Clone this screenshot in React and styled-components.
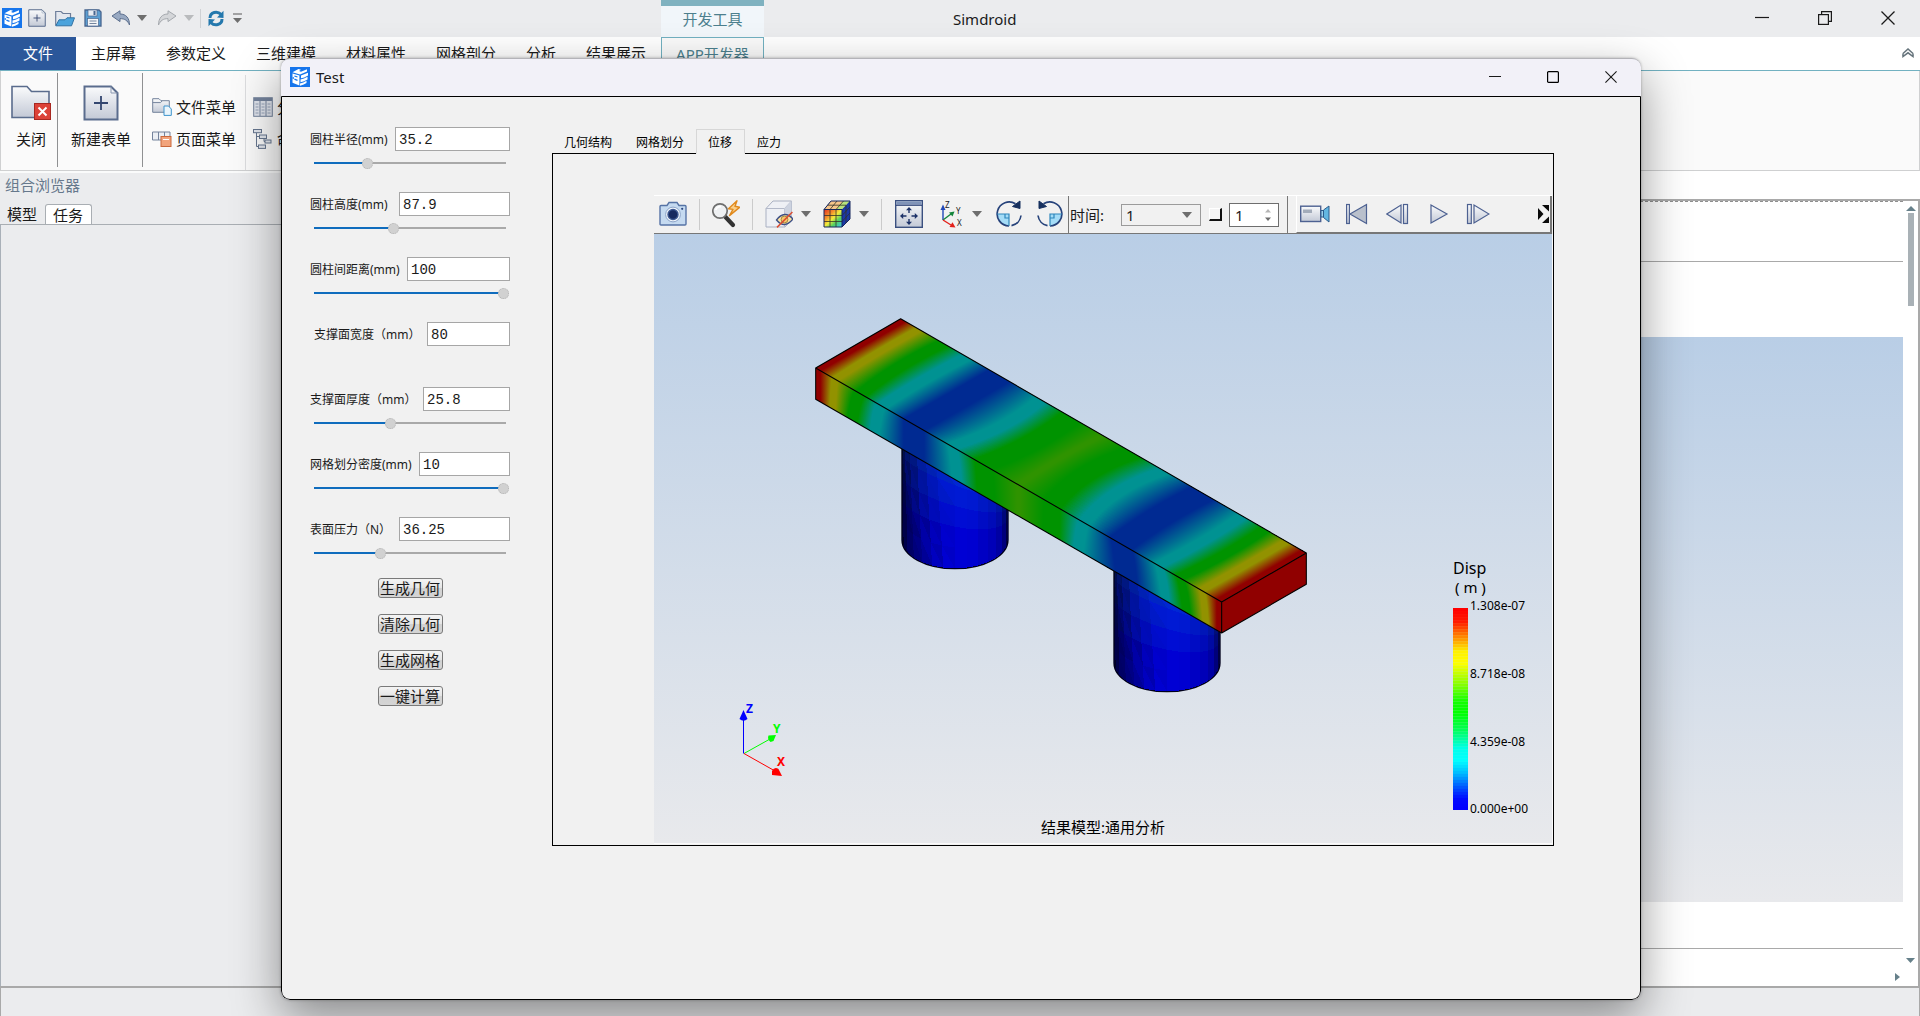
import React, { useState } from "react";
import styled, { createGlobalStyle } from "styled-components";

const GlobalStyle = createGlobalStyle`
  * { box-sizing: border-box; }
  html, body, #root { height: 100%; }
  body {
    margin: 0;
    overflow: hidden;
    background: #ebecee;
    color: #1a1a1a;
    font-family: "Noto Sans", "Noto Sans CJK SC", sans-serif;
    font-size: 15px;
    line-height: 20px;
  }
  button, input, select { font: inherit; color: inherit; }
  button { border: 0; padding: 0; background: none; }
  svg { display: block; flex: none; }
`;

/* ---------- main window ---------- */

const Desktop = styled.div`
  position: relative;
  display: flex;
  flex-direction: column;
  height: 100vh;
`;

const TitleBar = styled.header`
  display: flex;
  height: 37px;
  flex: none;
`;

const QuickAccess = styled.div`
  display: flex;
  align-items: center;
  width: 661px;
  padding: 0 0 1px 2px;
`;

const QuickButton = styled.button`
  margin-right: ${props => props.$gap || 8}px;
`;

const QuickRule = styled.span`
  width: 1px;
  height: 19px;
  margin-right: 7px;
  background: #cfd1d4;
`;

const ContextTab = styled.div`
  width: 103px;
  border-top: 6px solid #7fb2c0;
  background: #f1f6fa;
  color: #4c7f8d;
  text-align: center;
  line-height: 26px;
`;

const WindowTitle = styled.h1`
  margin: 0 auto 0 189px;
  font-size: 15px;
  font-weight: 400;
  line-height: 38px;
`;

const WindowButton = styled.button`
  display: flex;
  align-items: center;
  justify-content: center;
  width: ${props => props.$wide ? 63 : 58}px;
  padding: 0 2px 1px 0;
`;

const MenuBar = styled.nav`
  display: flex;
  flex: none;
  height: 34px;
  background: #fff;
  border-bottom: 1px solid #72b1c1;
`;

const MenuItem = styled.button`
  padding: 0 15px;
  line-height: 33px;
`;

const FileItem = styled(MenuItem)`
  width: 76px;
  background: #2b579a;
  color: #fff;
`;

const AppItem = styled(MenuItem)`
  padding: 0 14px;
  border: 1px solid #72b1c1;
  border-bottom: 0;
  background: #fafafa;
  color: #4c7f8d;
`;

const CollapseButton = styled.button`
  margin: 0 6px 2px auto;
`;

const Ribbon = styled.div`
  display: flex;
  flex: none;
  height: 100px;
  border: 1px solid #cfd0d1;
  border-top: 0;
  background: #fafafa;
`;

const RibbonGroup = styled.div`
  display: flex;
  margin: ${props => props.$light ? "4px 0 0" : "2px 0 3px"};
  padding: 0 ${props => props.$right}px 0 ${props => props.$left}px;
  border-right: 1px solid ${props => props.$light ? "#dcdddf" : "#8f9092"};
`;

const BigButton = styled.button`
  display: flex;
  flex-direction: column;
  align-items: center;
  gap: 8px;
  padding-top: 12px;
`;

const StackedButtons = styled.div`
  display: flex;
  flex-direction: column;
  gap: 12px;
  padding-top: ${props => props.$top}px;
`;

const SmallButton = styled.button`
  display: flex;
  align-items: center;
  gap: 4px;
  height: 20px;
  white-space: nowrap;
`;

const WorkArea = styled.main`
  display: flex;
  flex: 1;
  min-height: 0;
`;

const Browser = styled.aside`
  display: flex;
  flex-direction: column;
  width: 400px;
  border-top: 2px solid #fafbfb;
`;

const BrowserTitle = styled.h2`
  margin: 0;
  padding: 2px 5px 9px;
  color: #66788c;
  font-size: 15px;
  font-weight: 400;
`;

const BrowserTabs = styled.div`
  display: flex;
  border-bottom: 1px solid #a9aeb3;
`;

const BrowserTab = styled.button`
  height: 20px;
  padding: 0 8px 0 7px;
  ${props => props.$active && `
    border: 1px solid #a9aeb3;
    border-bottom: 0;
    border-radius: 3px 3px 0 0;
    background: #fff;
  `}
`;

const BrowserBody = styled.div`
  flex: 1;
  border-left: 1px solid #a9b0b8;
`;

const Canvas = styled.section`
  display: flex;
  flex: 1;
  padding-top: 28px;
  background: #fff;
`;

const CanvasFrame = styled.div`
  display: flex;
  flex: 1;
  border-top: 2px solid #a9a9a9;
  border-right: 2px solid #a9a9a9;
`;

const CanvasPage = styled.div`
  display: flex;
  flex: 1;
  flex-direction: column;
  border-top: 1px dashed #8f8f8f;
`;

const CanvasHead = styled.div`
  height: 60px;
  border-bottom: 1px solid #a9a9a9;
`;

const CanvasPreview = styled.div`
  flex: 1;
  margin: 75px 0 46px;
  background: linear-gradient(#b9cee6, #e8e9ec);
`;

const CanvasFoot = styled.div`
  display: flex;
  align-items: center;
  justify-content: flex-end;
  height: 38px;
  padding: 18px 3px 0 0;
  border-top: 1px solid #a9a9a9;
`;

const ScrollBar = styled.div`
  display: flex;
  flex-direction: column;
  align-items: center;
  width: 15px;
  padding: 5px 0 23px;
`;

const ScrollThumb = styled.div`
  width: 6px;
  height: 93px;
  margin: 2px 0 auto;
  background: #a9b1b6;
`;

const StatusBar = styled.footer`
  flex: none;
  height: 30px;
  border: 1px solid #a9a9a9;
  border-width: 2px 1px 0;
`;

/* ---------- dialog ---------- */

const Dialog = styled.section`
  position: absolute;
  top: 58px;
  right: 279px;
  bottom: 16px;
  left: 281px;
  display: flex;
  flex-direction: column;
  overflow: hidden;
  border: 1px solid #b3b3b8;
  border-width: 1px 0 0;
  border-radius: 9px;
  background: #f2f1f8;
  box-shadow: 0 18px 48px rgba(0, 0, 0, 0.42), 0 0 3px rgba(0, 0, 0, 0.3);
`;

const DialogTitleBar = styled.header`
  display: flex;
  align-items: stretch;
  flex: none;
  height: 37px;
  padding: 0 0 1px 9px;
`;

const DialogTitle = styled.h2`
  display: flex;
  align-items: center;
  gap: 6px;
  margin: 0 auto 0 0;
  font-size: 15px;
  font-weight: 400;
`;

const DialogBody = styled.div`
  display: flex;
  flex: 1;
  gap: 42px;
  min-height: 0;
  padding: 30px 86px 153px 28px;
  border: 1px solid #000;
  border-radius: 0 0 9px 9px;
  background: #f1f1f1;
`;

const Form = styled.form`
  display: flex;
  flex-direction: column;
  gap: 23px;
  flex: none;
  width: 200px;
`;

const FieldBox = styled.div`
  height: 42px;
`;

const FieldRow = styled.div`
  display: flex;
  align-items: center;
  justify-content: space-between;
  padding-left: ${props => props.$indent ? 4 : 0}px;
`;

const FieldLabel = styled.label`
  padding-top: 2px;
  font-size: 12px;
  white-space: nowrap;
`;

const TextInput = styled.input`
  width: ${props => props.$width}px;
  height: 24px;
  padding: 2px 3px 0;
  border: 1px solid #a6a6a6;
  background: #fff;
  font-family: "Liberation Mono", "Noto Sans CJK SC", monospace;
  font-size: 14px;
`;

const Slider = styled.input.attrs({ type: "range" })`
  display: block;
  appearance: none;
  width: 197px;
  height: 12px;
  margin: 6px 0 0 2px;
  background: linear-gradient(to right, #0f6cbd var(--fill), #a9a9a9 var(--fill)) 2px 5px / 192px 2px no-repeat;

  &::-webkit-slider-thumb {
    appearance: none;
    width: 11px;
    height: 11px;
    border: 1px dotted #b3b3b3;
    border-radius: 50%;
    background: #d1d1d1;
  }
`;

const Actions = styled.div`
  display: flex;
  flex-direction: column;
  align-items: center;
  gap: 16px;
  margin-top: -4px;
`;

const ActionButton = styled.button`
  width: 65px;
  height: 20px;
  border: 1px solid #7a7a7a;
  border-radius: 3px;
  background: linear-gradient(#f4f4f4, #e6e6e6 48%, #d2d2d2 52%, #d4d4d4);
  line-height: 16px;
  white-space: nowrap;
`;

const Results = styled.div`
  display: flex;
  flex: 1;
  flex-direction: column;
  min-width: 0;
  padding-top: 2px;
`;

const ResultTabs = styled.div`
  display: flex;
`;

const ResultTab = styled.button`
  position: relative;
  height: 25px;
  margin-bottom: -1px;
  padding: 2px 12px 0 ${props => props.$active ? 11 : 12}px;
  font-size: 12px;
  color: #000;
  ${props => props.$active && `
    border: 1px solid #d7d7d7;
    border-bottom-color: #f1f1f1;
    background: #f1f1f1;
  `}
`;

const ResultPanel = styled.div`
  display: flex;
  flex: 1;
  flex-direction: column;
  min-height: 0;
  padding: 41px 0 1px 101px;
  border: 1px solid #000;
`;

const ToolBar = styled.div`
  display: flex;
  align-items: stretch;
  flex: none;
  height: 39px;
  margin-right: 1px;
  border-top: 1px solid #fff;
  border-bottom: 1px solid #777;
`;

const ToolGroup = styled.div`
  display: flex;
  align-items: center;
  gap: ${props => props.$gap}px;
  padding: 0 ${props => props.$right}px 1px ${props => props.$left}px;
`;

const ToolButton = styled.button`
  display: flex;
  align-items: center;
  gap: 8px;
`;

const ToolRule = styled.span`
  width: 1px;
  height: 31px;
  background: #cbcbcb;
`;

const TimeGroup = styled.div`
  display: flex;
  align-items: center;
  padding: 0 8px 0 1px;
  border: 1px solid #777;
  border-width: 0 1px;
`;

const TimeLabel = styled.label`
  width: 51px;
`;

const SelectWrap = styled.span`
  display: flex;
  align-items: center;
  height: 22px;
  padding-right: 8px;
  border: 1px solid #9b9b9b;
`;

const TimeSelect = styled.select`
  appearance: none;
  width: 61px;
  height: 20px;
  margin-right: -1px;
  padding: 0 4px;
  border: 0;
  background: transparent;
`;

const LoopBox = styled.input.attrs({ type: "checkbox" })`
  appearance: none;
  width: 13px;
  height: 13px;
  margin: 0 7px 0 8px;
  border: 1px solid #fff;
  border-width: 1px 2px 2px 1px;
  border-right-color: #111;
  border-bottom-color: #111;
  background: #f4f4f4;
`;

const SpinWrap = styled.span`
  display: flex;
  align-items: center;
  width: 50px;
  height: 24px;
  padding-right: 7px;
  border: 1px solid #6e6e6e;
  background: #fff;
`;

const SpinInput = styled.input`
  flex: 1;
  width: 0;
  height: 22px;
  padding: 0 5px;
  border: 0;
  background: transparent;
`;

const Player = styled.div`
  display: flex;
  align-items: center;
  flex: 1;
  gap: 16px;
  margin-left: 8px;
  padding: 0 1px 0 3px;
  border-left: 1px solid #fff;
  border-right: 2px solid #777;
  border-bottom: 1px solid #777;
`;

const Overflow = styled.button`
  margin-left: auto;
`;

const Viewport = styled.div`
  display: flex;
  flex: 1;
  min-height: 0;
  border: 1px solid #fafafa;
  border-width: 0 1px 1px 0;
  background: linear-gradient(#b9cee6, #e8e9ec);

  svg {
    flex: 1;
    width: 100%;
    height: 100%;
  }
`;

/* ---------- icons ---------- */

const Logo = () => (
    <svg width="20" height="20" viewBox="0 0 20 20">
        <rect width="20" height="20" fill="#1675ec" />
        <path d="M2.5 5.2 L8.5 2 L11 2.8 L9 4 L11 4.8 L17 2.2 V4.4 L10 7.4 Z" fill="#fff" />
        <path d="M11 8.6 L18 5.800 V8.400 Q14 10.800 11 11.200 Z M10.500 12.600 Q14 12 17.500 9.800 V12.400 Q14 14.600 10.500 15.200 Z M10 16.600 Q13.500 16 16.500 13.800 V16 Q13 18.200 10 18.800 Z" fill="#fff" />
        <path d="M2.500 6.600 L9.400 8.600 V18.400 L2.500 15.800 Z" fill="#fff" />
        <path d="M4.400 9 L7.500 10 M4.400 12.200 L7.500 13.300 M2.500 11 H4" stroke="#1675ec" strokeWidth="1.300" />
    </svg>
);

const Caret = ({ color = "#6e6e6e" }) => (
    <svg width="10" height="6" viewBox="0 0 10 6"><path d="M0 0 H10 L5 6 Z" fill={color} /></svg>
);

const PageIcon = ({ size }) => (
    <svg width={size} height={size} viewBox="0 0 36 36">
        <path d="M1.5 1.5 H28 L34.5 8 V34.5 H1.5 Z" fill="url(#steel)" stroke="#5a6c8d" strokeWidth="2" />
        <path d="M28 1.5 V8 H34.5" fill="none" stroke="#8b98b0" />
        <path d="M18 11 V25 M11 18 H25" stroke="#33466f" strokeWidth="1.8" />
    </svg>
);

const OpenIcon = () => (
    <svg width="20" height="17" viewBox="0 0 20 17">
        <path d="M.7 15.5 V1.5 H6 L8 3.5 H15.5 V8" fill="#e3e7ee" stroke="#6d7d99" strokeWidth="1.2" />
        <path d="M.8 15.8 L4 9.8 H10 L12 7.8 H19.5 L16.5 15.8 Z" fill="#4ba3dc" stroke="#3172a4" strokeWidth="1" />
    </svg>
);

const SaveIcon = () => (
    <svg width="18" height="18" viewBox="0 0 18 18">
        <path d="M1 1 H15 L17 3 V17 H1 Z" fill="#5c9fd2" stroke="#49668f" strokeWidth="1.3" />
        <rect x="4" y="1" width="9" height="6" fill="#e8edf3" stroke="#49668f" strokeWidth=".7" />
        <rect x="9.5" y="2" width="2" height="4" fill="#49668f" />
        <rect x="3.5" y="9.5" width="11" height="7.5" fill="#f3f5f7" stroke="#49668f" strokeWidth=".7" />
        <path d="M5.5 12 H12.5 M5.5 14.5 H12.5" stroke="#73859f" />
    </svg>
);

const UndoIcon = ({ redo }) => (
    <svg width="20" height="16" viewBox="0 0 20 16">
        <g transform={redo ? "translate(20 0) scale(-1 1)" : undefined}>
            <path d="M1 6 L9 .8 V4 C15 4 18.5 8 18.5 15 C16.5 10.5 14 8.7 9 8.6 V11.6 Z"
                fill={redo ? "#d4d6d9" : "#98a9c2"} stroke={redo ? "#a4a8ad" : "#5b6e8d"} strokeLinejoin="round" />
        </g>
    </svg>
);

const RefreshIcon = () => (
    <svg width="16" height="17" viewBox="0 0 16 17" fill="none" stroke="#2478ad" strokeWidth="3">
        <path d="M2 8 C2 1.8 9.5 .8 13 4.3" />
        <path d="M14 9 C14 15.2 6.5 16.2 3 12.7" />
        <path d="M15.5 .8 V8 L9 7.5 Z M.5 16.2 V9 L7 9.5 Z" fill="#2478ad" stroke="none" />
    </svg>
);

const CloseFormIcon = () => (
    <svg width="40" height="36" viewBox="0 0 40 36">
        <path d="M1 32.5 V1.5 H16 L20.5 6.5 H38 V32.5 Z" fill="url(#steel)" stroke="#5a6c8d" strokeWidth="1.6" />
        <rect x="23.5" y="18.5" width="16" height="16" fill="#dc4238" stroke="#a82720" />
        <path d="M27.5 22.5 L35.5 30.5 M35.5 22.5 L27.5 30.5" stroke="#fff" strokeWidth="2" />
    </svg>
);

const FileMenuIcon = () => (
    <svg width="20" height="18" viewBox="0 0 20 18">
        <path d="M.7 14.3 V.7 H7 L9 2.7 H17.3 V14.3 Z" fill="url(#steel)" stroke="#74839c" />
        <path d="M.7 4.6 H8.6 L10 3" fill="none" stroke="#74839c" />
        <path d="M12 8 H16.5 L19.3 11 V17.4 H12 Z" fill="#eaf5fc" stroke="#3e94cd" />
    </svg>
);

const PageMenuIcon = () => (
    <svg width="20" height="16" viewBox="0 0 20 16">
        <path d="M.5 1 H18 V9 H.5 Z M6.5 1 V9 M12.5 1 V9" fill="#eceff4" stroke="#74839c" />
        <rect x="9" y="5.5" width="10" height="10" fill="#f2a47c" stroke="#c9683c" />
        <path d="M11 8.5 H17" stroke="#fff" />
    </svg>
);

const TableIcon = () => (
    <svg width="20" height="20" viewBox="0 0 20 20">
        <rect x=".7" y=".7" width="18.6" height="18.6" fill="#dfe3eb" stroke="#74839c" />
        <rect x="1" y="1" width="18" height="3" fill="#74839c" />
        <path d="M7 4 V19 M13 4 V19" stroke="#74839c" />
        <path d="M2.5 7 H5.5 M8.5 7 H11.5 M14.5 7 H17.5 M2.5 10 H5.5 M8.5 10 H11.5 M14.5 10 H17.5 M2.5 13 H5.5 M8.5 13 H11.5 M14.5 13 H17.5 M2.5 16 H5.5 M8.5 16 H11.5 M14.5 16 H17.5" stroke="#93a0b6" />
    </svg>
);

const TreeIcon = () => (
    <svg width="20" height="20" viewBox="0 0 20 20" fill="#e3e7ee" stroke="#66768f">
        <path d="M3.5 3.5 V17.5 H8 M3.5 7.5 H8 M11 10 V12.5 H13" fill="none" />
        <rect x=".5" y=".5" width="8" height="3.2" />
        <rect x="6.5" y="6" width="7" height="3.5" />
        <rect x="12" y="11" width="6" height="3" />
        <rect x="5.5" y="16" width="7" height="3.4" />
    </svg>
);

const MinimizeIcon = ({ size }) => (
    <svg width={size} height={size} viewBox={`0 0 ${size} ${size}`}><path d={`M0 ${size / 2 - 0.5} H${size}`} stroke="#1a1a1a" strokeWidth="1.2" /></svg>
);

const MaximizeIcon = () => (
    <svg width="12" height="12" viewBox="0 0 12 12"><rect x=".6" y=".6" width="10.8" height="10.8" rx="1" fill="none" stroke="#000" strokeWidth="1.2" /></svg>
);

const RestoreIcon = () => (
    <svg width="14" height="14" viewBox="0 0 14 14" fill="none" stroke="#1a1a1a" strokeWidth="1.2">
        <rect x=".6" y="3.6" width="9.8" height="9.8" />
        <path d="M3.6 3.6 V.6 H13.4 V10.4 H10.4" />
    </svg>
);

const CloseIcon = ({ size }) => (
    <svg width={size} height={size} viewBox="0 0 14 14"><path d="M.5 .5 L13.5 13.5 M13.5 .5 L.5 13.5" stroke="#1a1a1a" strokeWidth="1.3" /></svg>
);

const CameraIcon = () => (
    <svg width="28" height="28" viewBox="0 0 28 28">
        <path d="M1 6.5 Q1 5.5 2 5.5 H8 L10 2.5 H18 L20 5.5 H26 Q27 5.5 27 6.5 V24 Q27 25 26 25 H2 Q1 25 1 24 Z" fill="#c5daf0" stroke="#5673a5" strokeWidth="1.4" />
        <circle cx="14" cy="14.5" r="7.4" fill="#eef4fb" stroke="#8ba3c8" />
        <circle cx="14" cy="14.5" r="5" fill="#16295f" stroke="#3b568f" strokeWidth="1.4" />
        <circle cx="23.2" cy="8.8" r="1.1" fill="#2c4780" />
    </svg>
);

const ZoomFlashIcon = () => (
    <svg width="28" height="28" viewBox="0 0 28 28">
        <path d="M13.5 17 L21 25" stroke="#333" strokeWidth="4.2" strokeLinecap="round" />
        <circle cx="8" cy="11" r="7.2" fill="#eef0f2" stroke="#6e6e6e" strokeWidth="1.7" />
        <path d="M3.8 10 A4.6 4.6 0 0 1 9 6.6" fill="none" stroke="#fff" strokeWidth="1.8" />
        <path d="M25 .8 L16.5 8.8 L21 9.4 L17.5 15.6 L27.6 7.3 L23 6.3 Z" fill="#fbd08a" stroke="#e08a1e" strokeWidth="1.4" strokeLinejoin="round" />
    </svg>
);

const HideIcon = () => (
    <svg width="28" height="28" viewBox="0 0 28 28">
        <path d="M1 8.5 L8 1 H26.5 V20 L20 27 H1 Z" fill="#eef0f5" stroke="#a9b0c2" />
        <path d="M1 8.5 H19.5 V27 M19.5 8.5 L26.5 1" fill="none" stroke="#b3b9c9" />
        <path d="M19.5 8.5 L26.5 1 V20 L19.5 27 Z" fill="#cdd3e0" />
        <path d="M11.500 20 Q19.500 9.500 28 19 Q19.500 29.500 11.500 20 Z" fill="#fbe1a1" stroke="#3c4f86" strokeWidth="1.3" />
        <circle cx="19.5" cy="19.5" r="3.400" fill="#f8c86a" stroke="#a08848" />
        <path d="M12 27.4 L27.4 12" stroke="#dc4c30" strokeWidth="1.5" />
    </svg>
);

const FieldCubeIcon = () => (
    <svg width="28" height="28" viewBox="0 0 28 28">
        <path d="M1 9.5 L8 1 H27 V19 L19 27 H1 Z" fill="#2b4a9b" />
        <rect x="1" y="9.5" width="18" height="17.5" fill="url(#cubeFace)" />
        <path d="M1 9.5 L8 1 H27 L19 9.5 Z" fill="#f6c58a" />
        <path d="M13 9.5 L20.500 1 H27 L19 9.5 Z" fill="#b8e27c" />
        <path d="M19 9.5 L27 1 V19 L19 27 Z" fill="#1a38a8" />
        <path d="M7 9.500 V27 M13 9.5 V27 M1 15.5 H19 L27 7 M1 21.500 H19 L27 13 M7 9.5 L14 1 M13 9.5 L20.500 1 M4.500 5.200 H23 M23 5 V23" stroke="#33322a" strokeWidth=".8" fill="none" />
        <path d="M1 9.5 L8 1 H27 V19 L19 27 H1 Z M1 9.5 H19 V27" stroke="#17265c" fill="none" />
    </svg>
);

const FitIcon = () => (
    <svg width="28" height="28" viewBox="0 0 28 28">
        <rect x=".7" y=".7" width="26.6" height="26.6" fill="url(#steel)" stroke="#3b5080" strokeWidth="1.4" />
        <rect x="1.4" y="1.4" width="25.2" height="3.4" fill="#7f93b8" />
        <path d="M1 5.300 H27" stroke="#22386f" />
        <path d="M14 7 L17 10.200 H14.700 V13 H13.300 V10.200 H11 Z M14 25 L17 21.800 H14.700 V19 H13.300 V21.800 H11 Z M5 16 L8.200 13 V15.300 H11.500 V16.700 H8.200 V19 Z M23 16 L19.800 13 V15.300 H16.500 V16.700 H19.800 V19 Z" fill="#1d3268" />
    </svg>
);

const AxesIcon = () => (
    <svg width="28" height="30" viewBox="0 0 28 30" fontFamily="Noto Sans, sans-serif" fontSize="8">
        <path d="M7 21 V9" stroke="#2148b8" strokeWidth="1.400" />
        <path d="M7 5.500 L9.500 11 H4.500 Z" fill="#2148b8" />
        <path d="M7 21 L15 15" stroke="#14853c" strokeWidth="1.400" />
        <path d="M18.500 12.500 L16.500 17.500 L13 13.500 Z" fill="#14853c" />
        <path d="M7 21 L15 26" stroke="#e3201a" strokeWidth="1.400" />
        <path d="M19.500 28.500 L13.500 28 L16.500 23.200 Z" fill="#e3201a" />
        <text x="9" y="9" fill="#222">Z</text>
        <text x="20" y="15" fill="#222">Y</text>
        <text x="21" y="27" fill="#222">X</text>
    </svg>
);

const RotateIcon = ({ back }) => (
    <svg width="28" height="28" viewBox="0 0 28 28">
        <g transform={back ? "translate(28 0) scale(-1 1)" : undefined}>
            <path d="M2 14 A12 12 0 0 0 14 26 V14 Z" fill="#a4dcf7" />
            <path d="M20.500 3.800 A12 12 0 1 0 14 26" fill="none" stroke="#26427a" strokeWidth="1.700" />
            <path d="M16.500 25.700 A12 12 0 0 0 26 15.500" fill="none" stroke="#26427a" strokeWidth="1.700" />
            <path d="M25 1 V8.500 L17.500 6.500 Z" fill="#17305f" stroke="#17305f" />
            <path d="M2 14 H14 V26 M10 14 V18 H14" fill="none" stroke="#2e86bb" strokeWidth="1.200" />
        </g>
    </svg>
);

const VideoIcon = () => (
    <svg width="30" height="18" viewBox="0 0 30 18">
        <rect x=".7" y="1.200" width="20" height="15.300" fill="url(#steel)" stroke="#4d6191" strokeWidth="1.400" />
        <rect x="3" y="4.500" width="9" height="3.500" fill="#a3acba" />
        <path d="M21 5.500 H23.500 V12 H21 Z" fill="#9fd3ee" stroke="#2d5c8c" />
        <path d="M23.500 5 L29 1 V17 L23.500 12.500 Z" fill="#63b7e2" stroke="#2d5c8c" />
    </svg>
);

const FirstIcon = () => (
    <svg width="24" height="24" viewBox="0 0 24 24" fill="url(#steel)" stroke="#4d6191" strokeWidth="1.200">
        <rect x=".6" y="2.500" width="2.800" height="19" />
        <path d="M20.500 2.500 V21.500 L4 12 Z" fill="#b9c0cc" />
    </svg>
);

const PrevIcon = () => (
    <svg width="24" height="24" viewBox="0 0 24 24" fill="url(#steel)" stroke="#4d6191" strokeWidth="1.200">
        <path d="M15 3 V21 L.8 12 Z" />
        <rect x="17.500" y="2.500" width="4" height="19" />
    </svg>
);

const PlayIcon = () => (
    <svg width="24" height="24" viewBox="0 0 24 24" fill="url(#steel)" stroke="#4d6191" strokeWidth="1.200">
        <path d="M5 3 V21 L21 12 Z" />
    </svg>
);

const NextIcon = () => (
    <svg width="24" height="24" viewBox="0 0 24 24" fill="url(#steel)" stroke="#4d6191" strokeWidth="1.200">
        <rect x="1.500" y="2.500" width="3.800" height="19" />
        <path d="M8 3 V21 L23 12 Z" />
    </svg>
);

const OverflowIcon = () => (
    <svg width="11" height="18" viewBox="0 0 11 18">
        <path d="M0 3 L5.500 9 L0 15 Z M4 0 H11 V6.500 Z M4 18 H11 V11.500 Z" fill="#0b0b0b" />
    </svg>
);

/* shared gradients used by the icons */
const IconDefs = styled.svg`
  position: absolute;
`;

const Defs = () => (
    <IconDefs width="0" height="0" aria-hidden="true">
        <linearGradient id="steel" x1="0" y1="0" x2="0" y2="1">
            <stop offset="0" stopColor="#fafbfc" />
            <stop offset="1" stopColor="#c3c9d6" />
        </linearGradient>
        <linearGradient id="cubeFace" x1="0" y1="0" x2="1" y2="1">
            <stop offset="0" stopColor="#e33020" />
            <stop offset=".3" stopColor="#f4902c" />
            <stop offset=".5" stopColor="#f3ec3b" />
            <stop offset=".7" stopColor="#53d060" />
            <stop offset="1" stopColor="#3cc5ee" />
        </linearGradient>
    </IconDefs>
);

/* ---------- 3D result ---------- */

const RED = "#900000";
const YELLOW = "#929200";
const GREEN = "#009300";
const CYAN = "#009292";
const BLUE = "#002a92";

// every colour band along the beam: centre at [back edge, middle, front edge, bottom edge], half width
const bands = [
    [RED, 0, 0, 0, 0, 0.012],
    [YELLOW, 0.045, 0.044, 0.048, 0.042, 0.007],
    [GREEN, 0.105, 0.101, 0.112, 0.09, 0.012],
    [CYAN, 0.163, 0.159, 0.163, 0.145, 0.011],
    [BLUE, 0.243, 0.243, 0.242, 0.242, 0.025],
    [CYAN, 0.345, 0.353, 0.335, 0.348, 0.012],
    [GREEN, 0.42, 0.426, 0.412, 0.42, 0.022],
    ["#2f9300", 0.498, 0.494, 0.5, 0.5, 0.004],
    [GREEN, 0.572, 0.56, 0.583, 0.58, 0.02],
    [CYAN, 0.65, 0.638, 0.662, 0.647, 0.012],
    [BLUE, 0.745, 0.742, 0.751, 0.765, 0.027],
    [CYAN, 0.842, 0.847, 0.843, 0.862, 0.01],
    [GREEN, 0.898, 0.902, 0.895, 0.914, 0.01],
    [YELLOW, 0.951, 0.951, 0.95, 0.961, 0.007],
    [RED, 1, 1, 1, 1, 0.012],
];

const STRIPS = 30;

function topOffset(band, t) {
    const [, back, middle, front] = band;
    return front * (1 - t) * (1 - 2 * t) + 4 * middle * t * (1 - t) + back * t * (2 * t - 1);
}

function sideOffset(band, t) {
    return band[3] + (band[4] - band[3]) * Math.sqrt(t);
}

const Face = ({ name, matrix, offset, top }) => (
    <g transform={matrix} shapeRendering="crispEdges">
        {Array.from({ length: STRIPS }, (_, i) => {
            // the strip parameter runs from the front edge, or downwards on the side
            const t = top ? 1 - (i + 0.5) / STRIPS : (i + 0.5) / STRIPS;
            const y = top ? 1 - (i + 1) / STRIPS : i / STRIPS;
            return (
                <g key={i}>
                    <linearGradient id={`${name}${i}`} x1="0" y1="0" x2="1" y2="0">
                        {bands.flatMap((band, j) => {
                            const at = offset(band, t);
                            return [-1, 1].map(k => (
                                <stop key={`${j}${k}`} offset={Math.min(1, Math.max(0, at + k * band[5]))} stopColor={band[0]} />
                            ));
                        })}
                    </linearGradient>
                    <rect x="0" y={y} width="1" height={top ? 1 / STRIPS : 1 - y} fill={`url(#${name}${i})`} />
                </g>
            );
        })}
    </g>
);

const COLS = 14;
const ROWS = 6;
const light = [0.16, 0.28, 0.4, 0.5, 0.62, 0.72, 0.8, 0.83, 0.82, 0.77, 0.72, 0.64, 0.48, 0.26];

// faceted half of a cylinder, its top hidden behind the beam
const Cylinder = ({ cx, cy }) => {
    const rx = 158;
    const ry = 85;
    const facets = [];
    const point = (c, r) => {
        const lean = c > 0 && c < 7 ? (ROWS - r) * 0.13 : 0;
        const angle = (Math.max(0, c - lean) / COLS) * Math.PI;
        const x = cx - rx * Math.cos(angle);
        const top = cy - 480 + (x - cx + rx) * 0.576 + 100;
        const bottom = cy + ry * Math.sin(angle);
        return [x, top + ((bottom - top) * r) / ROWS];
    };
    for (let c = 0; c < COLS; c++) {
        for (let r = 0; r < ROWS; r++) {
            const noise = c < 7 ? (((c * 7 + r * 5) % 6) - 2.5) * 0.012 : 0;
            const glow = Math.max(0, 1 - r / 4) * 62 * light[c];
            const shade = k => `rgb(0, ${Math.round(glow)}, ${Math.round(255 * (light[c] + noise * k))})`;
            const a = point(c, r), b = point(c + 1, r), d = point(c, r + 1), e = point(c + 1, r + 1);
            facets.push(<path key={`${c}-${r}`} d={`M${a} L${b} L${e} L${d} Z`} fill={shade(1)} />);
            if (c < 7) {
                facets.push(<path key={`${c}-${r}b`} d={`M${a} L${e} L${d} Z`} fill={shade(-1)} />);
            }
        }
    }
    return (
        <g>
            <path d={`M${cx - rx} ${cy - 280} V${cy} A${rx} ${ry} 0 0 0 ${cx + rx} ${cy} V${cy - 100}`} fill="#0000a0" stroke="#00001c" strokeWidth="6" />
            <g shapeRendering="crispEdges">{facets}</g>
        </g>
    );
};

const legendStops = [
    [0, 255, 0, 0],
    [0.06, 255, 25, 0],
    [0.14, 255, 140, 0],
    [0.21, 255, 240, 0],
    [0.27, 255, 255, 0],
    [0.38, 130, 255, 0],
    [0.46, 20, 255, 0],
    [0.52, 0, 255, 0],
    [0.6, 0, 255, 80],
    [0.7, 0, 255, 235],
    [0.76, 0, 255, 255],
    [0.82, 0, 190, 255],
    [0.9, 0, 75, 255],
    [0.95, 0, 10, 255],
    [1, 0, 0, 255],
];

function legendColor(t) {
    const i = Math.max(1, legendStops.findIndex(stop => stop[0] >= t));
    const from = legendStops[i - 1];
    const to = legendStops[i];
    const k = (t - from[0]) / (to[0] - from[0]);
    return `rgb(${[1, 2, 3].map(n => Math.round(from[n] + (to[n] - from[n]) * k)).join(",")})`;
}

const LEGEND_STEPS = 67;

const Scene = () => (
    <svg viewBox="654 234 898 609" preserveAspectRatio="xMidYMid meet" fontFamily="Noto Sans, Noto Sans CJK SC, sans-serif">
        <g transform="translate(800 300) scale(.33333)">
            <Cylinder cx={465} cy={720} />
            <Cylinder cx={1101} cy={1089} />
            <path d="M47 204 L302 56 L1519 759 L1265 906 Z" fill={GREEN} />
            <Face name="top" matrix="matrix(1218 702 255 -147.500 47 204)" offset={topOffset} top />
            <Face name="side" matrix="matrix(1218 702 0 94 47 204)" offset={sideOffset} />
            <path d="M1265 906 L1519 759 V853 L1265 999 Z" fill={RED} />
            <path d="M47 204 L302 56 L1519 759 V853 L1265 999 L47 298 Z M47 204 L1265 906 V999 M1265 906 L1519 759"
                fill="none" stroke="#000" strokeWidth="3.200" strokeLinejoin="round" />
        </g>

        <path d="M743.500 753.500 V718" stroke="#00f" />
        <path d="M743.500 710 L747.500 719 Q743.500 722.500 739.500 719 Z" fill="#00f" />
        <path d="M744 753.500 L770 739" stroke="#0f0" />
        <path d="M776 735 L768.500 735.500 Q767 739 770.500 742 L773.500 741 Z" fill="#0f0" />
        <path d="M744 753.500 L775 771" stroke="#f00" />
        <path d="M782 776 L778.500 769 Q774.500 766.500 772 771 V775 Z" fill="#f00" />
        <g fontSize="12" fontWeight="700">
            <text x="746" y="713" fill="#00f">Z</text>
            <text x="773" y="733" fill="#0f0">Y</text>
            <text x="777" y="766" fill="#f00">X</text>
        </g>

        <text x="1453" y="574" fontSize="16">Disp</text>
        <text x="1455" y="593" fontSize="15">( m )</text>
        {Array.from({ length: LEGEND_STEPS }, (_, i) => (
            <rect key={i} x="1453" y={608 + (i * 202) / LEGEND_STEPS} width="15" height={Math.min(3.2, 202 - (i * 202) / LEGEND_STEPS)} fill={legendColor(i / (LEGEND_STEPS - 1))} />
        ))}
        <g fontSize="12">
            <text x="1470" y="610">1.308e-07</text>
            <text x="1470" y="678">8.718e-08</text>
            <text x="1470" y="746">4.359e-08</text>
            <text x="1470" y="813">0.000e+00</text>
        </g>
        <text x="1041" y="833" fontSize="15">结果模型:通用分析</text>
    </svg>
);

/* ---------- form ---------- */

const fields = [
    { id: "radius", label: "圆柱半径(mm)", value: "35.2", width: 115, slider: 27 },
    { id: "height", label: "圆柱高度(mm)", value: "87.9", width: 111, slider: 41 },
    { id: "distance", label: "圆柱间距离(mm)", value: "100", width: 103, slider: 100 },
    { id: "planeWidth", label: "支撑面宽度（mm）", value: "80", width: 83, indent: true },
    { id: "thickness", label: "支撑面厚度（mm）", value: "25.8", width: 87, slider: 39 },
    { id: "density", label: "网格划分密度(mm)", value: "10", width: 91, slider: 100 },
    { id: "pressure", label: "表面压力（N）", value: "36.25", width: 111, slider: 34 },
];

const Field = ({ field }) => {
    const [value, setValue] = useState(field.value);
    const [position, setPosition] = useState(field.slider);

    return (
        <FieldBox>
            <FieldRow $indent={field.indent}>
                <FieldLabel htmlFor={field.id}>{field.label}</FieldLabel>
                <TextInput id={field.id} $width={field.width} value={value} onChange={e => setValue(e.target.value)} />
            </FieldRow>
            {field.slider !== undefined && (
                <Slider
                    aria-label={field.label}
                    value={position}
                    style={{ "--fill": `${position}%` }}
                    onChange={e => setPosition(Number(e.target.value))}
                />
            )}
        </FieldBox>
    );
};

const menus = ["主屏幕", "参数定义", "三维建模", "材料属性", "网格剖分", "分析", "结果展示"];
const actions = ["生成几何", "清除几何", "生成网格", "一键计算"];
const resultTabs = ["几何结构", "网格划分", "位移", "应力"];

const TestDialog = () => {
    const [tab, setTab] = useState("位移");

    return (
        <Dialog role="dialog" aria-label="Test">
            <DialogTitleBar>
                <DialogTitle><Logo />Test</DialogTitle>
                <WindowButton aria-label="最小化"><MinimizeIcon size={12} /></WindowButton>
                <WindowButton aria-label="最大化"><MaximizeIcon /></WindowButton>
                <WindowButton aria-label="关闭"><CloseIcon size={12} /></WindowButton>
            </DialogTitleBar>
            <DialogBody>
                <Form onSubmit={e => e.preventDefault()}>
                    {fields.map(field => <Field key={field.id} field={field} />)}
                    <Actions>
                        {actions.map(name => <ActionButton key={name} type="button">{name}</ActionButton>)}
                    </Actions>
                </Form>
                <Results>
                    <ResultTabs>
                        {resultTabs.map(name => (
                            <ResultTab key={name} $active={name === tab} onClick={() => setTab(name)}>{name}</ResultTab>
                        ))}
                    </ResultTabs>
                    <ResultPanel>
                        <ToolBar>
                            <ToolGroup $gap={12} $left={5} $right={0}>
                                <ToolButton aria-label="截图"><CameraIcon /></ToolButton>
                                <ToolRule />
                                <ToolButton aria-label="缩放"><ZoomFlashIcon /></ToolButton>
                                <ToolRule />
                                <ToolButton aria-label="隐藏"><HideIcon /><Caret /></ToolButton>
                                <ToolButton aria-label="云图"><FieldCubeIcon /><Caret /></ToolButton>
                                <ToolRule />
                            </ToolGroup>
                            <ToolGroup $gap={13} $left={13} $right={4}>
                                <ToolButton aria-label="适应窗口"><FitIcon /></ToolButton>
                                <ToolButton aria-label="视角"><AxesIcon /><Caret /></ToolButton>
                                <ToolButton aria-label="顺时针旋转"><RotateIcon /></ToolButton>
                                <ToolButton aria-label="逆时针旋转"><RotateIcon back /></ToolButton>
                            </ToolGroup>
                            <TimeGroup>
                                <TimeLabel htmlFor="time">时间:</TimeLabel>
                                <SelectWrap>
                                    <TimeSelect id="time"><option>1</option></TimeSelect>
                                    <Caret />
                                </SelectWrap>
                                <LoopBox aria-label="循环" />
                                <SpinWrap>
                                    <SpinInput aria-label="步长" defaultValue="1" />
                                    <svg width="6" height="12" viewBox="0 0 6 12">
                                        <path d="M0 3.500 H6 L3 0 Z" fill="#b5b5b5" />
                                        <path d="M0 8.500 H6 L3 12 Z" fill="#6e6e6e" />
                                    </svg>
                                </SpinWrap>
                            </TimeGroup>
                            <Player>
                                <ToolButton aria-label="录制"><VideoIcon /></ToolButton>
                                <ToolButton aria-label="第一帧"><FirstIcon /></ToolButton>
                                <ToolButton aria-label="上一帧"><PrevIcon /></ToolButton>
                                <ToolButton aria-label="播放"><PlayIcon /></ToolButton>
                                <ToolButton aria-label="下一帧"><NextIcon /></ToolButton>
                                <Overflow aria-label="更多"><OverflowIcon /></Overflow>
                            </Player>
                        </ToolBar>
                        <Viewport><Scene /></Viewport>
                    </ResultPanel>
                </Results>
            </DialogBody>
        </Dialog>
    );
};

const App = () => (
    <>
        <GlobalStyle />
        <Defs />
        <Desktop>
            <TitleBar>
                <QuickAccess>
                    <QuickButton $gap={6} aria-label="Simdroid"><Logo /></QuickButton>
                    <QuickButton $gap={9} aria-label="新建"><PageIcon size={18} /></QuickButton>
                    <QuickButton $gap={9} aria-label="打开"><OpenIcon /></QuickButton>
                    <QuickButton $gap={9} aria-label="保存"><SaveIcon /></QuickButton>
                    <QuickButton $gap={6} aria-label="撤销"><UndoIcon /></QuickButton>
                    <QuickButton $gap={10} aria-label="撤销列表"><Caret /></QuickButton>
                    <QuickButton $gap={7} aria-label="重做"><UndoIcon redo /></QuickButton>
                    <QuickButton $gap={6} aria-label="重做列表"><Caret color="#b9bbbd" /></QuickButton>
                    <QuickRule />
                    <QuickButton $gap={9} aria-label="刷新"><RefreshIcon /></QuickButton>
                    <QuickButton aria-label="自定义">
                        <svg width="9" height="10" viewBox="0 0 9 10">
                            <path d="M0 1 H9" stroke="#8a8a8a" strokeWidth="1.500" />
                            <path d="M0 5 H9 L4.500 10 Z" fill="#6e6e6e" />
                        </svg>
                    </QuickButton>
                </QuickAccess>
                <ContextTab>开发工具</ContextTab>
                <WindowTitle>Simdroid</WindowTitle>
                <WindowButton $wide aria-label="最小化"><MinimizeIcon size={14} /></WindowButton>
                <WindowButton $wide aria-label="还原"><RestoreIcon /></WindowButton>
                <WindowButton $wide aria-label="关闭"><CloseIcon size={14} /></WindowButton>
            </TitleBar>
            <MenuBar>
                <FileItem>文件</FileItem>
                {menus.map(name => <MenuItem key={name}>{name}</MenuItem>)}
                <AppItem>APP开发器</AppItem>
                <CollapseButton aria-label="折叠功能区">
                    <svg width="12" height="10" viewBox="0 0 12 10" fill="none" stroke="#66747c" strokeWidth="1.500">
                        <path d="M1 5.500 L6 1 L11 5.500 M1 5.500 V8.500 L6 4.800 L11 8.500 V5.500" />
                    </svg>
                </CollapseButton>
            </MenuBar>
            <Ribbon>
                <RibbonGroup $left={10} $right={6}>
                    <BigButton><CloseFormIcon />关闭</BigButton>
                </RibbonGroup>
                <RibbonGroup $left={13} $right={11}>
                    <BigButton><PageIcon size={36} />新建表单</BigButton>
                </RibbonGroup>
                <RibbonGroup $light $left={9} $right={9}>
                    <StackedButtons $top={22}>
                        <SmallButton><FileMenuIcon />文件菜单</SmallButton>
                        <SmallButton><PageMenuIcon />页面菜单</SmallButton>
                    </StackedButtons>
                </RibbonGroup>
                <RibbonGroup $light $left={7} $right={7}>
                    <StackedButtons $top={22}>
                        <SmallButton><TableIcon />分组</SmallButton>
                        <SmallButton><TreeIcon />命令</SmallButton>
                    </StackedButtons>
                </RibbonGroup>
            </Ribbon>
            <WorkArea>
                <Browser>
                    <BrowserTitle>组合浏览器</BrowserTitle>
                    <BrowserTabs>
                        <BrowserTab>模型</BrowserTab>
                        <BrowserTab $active>任务</BrowserTab>
                    </BrowserTabs>
                    <BrowserBody />
                </Browser>
                <Canvas>
                    <CanvasFrame>
                        <CanvasPage>
                            <CanvasHead />
                            <CanvasPreview />
                            <CanvasFoot>
                                <svg width="5" height="8" viewBox="0 0 5 8"><path d="M0 0 V8 L5 4 Z" fill="#66808a" /></svg>
                            </CanvasFoot>
                        </CanvasPage>
                        <ScrollBar>
                            <svg width="10" height="5" viewBox="0 0 10 5"><path d="M0 5 H10 L5 0 Z" fill="#66808a" /></svg>
                            <ScrollThumb />
                            <svg width="9" height="5" viewBox="0 0 9 5"><path d="M0 0 H9 L4.500 5 Z" fill="#66808a" /></svg>
                        </ScrollBar>
                    </CanvasFrame>
                </Canvas>
            </WorkArea>
            <StatusBar />
            <TestDialog />
        </Desktop>
    </>
);

export default App;
